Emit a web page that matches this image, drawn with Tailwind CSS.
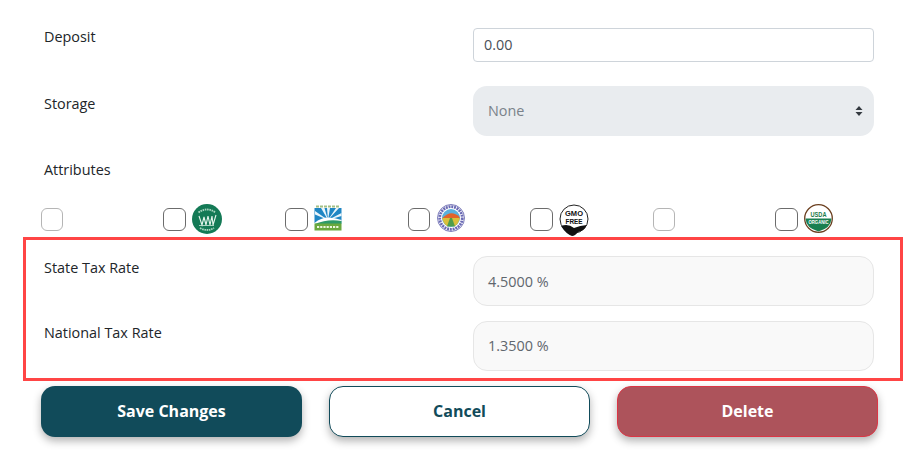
<!DOCTYPE html>
<html>
<head>
<meta charset="utf-8">
<script src="https://cdn.jsdelivr.net/npm/@tailwindcss/browser@4"></script>
</head>
<body class="bg-white font-['Open_Sans',sans-serif] text-[14.4px] text-[#212529]">
<div class="w-[920px] h-[476px] overflow-hidden">
  <!-- Deposit -->
  <div class="flex pl-[44px] pt-[28px] h-[86px]">
    <div class="w-[429px] leading-[17px]">Deposit</div>
    <div class="w-[401px] h-[34px] bg-white border border-[#ced4da] rounded-[4px] px-[10px] flex items-center text-[#495057] pb-[1px]">0.00</div>
  </div>
  <!-- Storage -->
  <div class="flex pl-[44px] h-[74px]">
    <div class="w-[429px] pt-[9px] leading-[17px]">Storage</div>
    <div class="w-[401px] h-[50px] bg-[#e9ecef] rounded-[14px] pl-[15px] pr-[11px] flex items-center justify-between text-[#7a828a] pb-[1px]">
      <span>None</span>
      <svg width="8" height="12" viewBox="0 0 8 12"><path d="M4 1 L7.5 5 L0.5 5 Z M4 11 L0.5 7 L7.5 7 Z" fill="#343a40"/></svg>
    </div>
  </div>
  <!-- Attributes -->
  <div class="pl-[44px] h-[44px] leading-[19px]">Attributes</div>
  <!-- Checkbox row -->
  <div class="h-[31px] pl-[41px] grid grid-rows-[31px] grid-cols-[122px_122px_123px_122px_123px_122px_100px] items-center">
    <div class="flex items-center"><span class="w-[22px] h-[23px] rounded-[6px] border border-[#b5b5b5] bg-white block"></span></div>
    <div class="flex items-center gap-[6px]">
      <span class="w-[23px] h-[23px] rounded-[6px] border border-[#6c6c6c] bg-white block"></span>
      <svg width="30" height="30" viewBox="0 0 30 30" class="mb-[1px]"><circle cx="15" cy="15" r="15" fill="#147a56"/><path d="M7 12 L10 21 L12 13 L14 21 L16 12 L18 21 L20 12 L21 21 L24 11" stroke="#e6f5ed" stroke-width="1.1" fill="none"/><path d="M7 21.5 H22" stroke="#cfe9dc" stroke-width="0.8"/><path d="M6.5 8.5 Q15 2.5 23.5 8.5" stroke="#a9d6c0" stroke-width="1.8" stroke-dasharray="1.6 0.7" fill="none"/><path d="M8 24 Q15 28 22 24" stroke="#a9d6c0" stroke-width="1.8" stroke-dasharray="1.6 0.7" fill="none"/></svg>
    </div>
    <div class="flex items-center gap-[6px]">
      <span class="w-[23px] h-[23px] rounded-[6px] border border-[#6c6c6c] bg-white block"></span>
      <svg width="28" height="26" viewBox="0 0 28 26" class="mb-[4px]"><path d="M2 1.5 H26" stroke="#a3bf85" stroke-width="2" stroke-dasharray="3 1"/><rect x="0.500" y="3" width="27" height="15" fill="#1f86c4"/><path d="M14 15 L1 6 V9.500 L14 15 L7 3 H10.500 L14 15 L13 3 H16 L14 15 L22 3 H25 L14 15 L27.500 8 V11 Z" fill="#e9f5fb"/><path d="M0.500 18 Q7 12.500 14 12.500 Q21 12.500 27.500 15 V18 Z" fill="#fff"/><path d="M0.500 19 Q14 13.500 27.500 16 V19 Z" fill="#2d9a6a"/><rect x="0.500" y="18.500" width="27" height="7" fill="#6aa83e"/><path d="M3 22 H25" stroke="#eef6e0" stroke-width="1.800" stroke-dasharray="2.200 1"/></svg>
    </div>
    <div class="flex items-center gap-[7px]">
      <span class="w-[22px] h-[23px] rounded-[6px] border border-[#6c6c6c] bg-white block"></span>
      <svg width="28" height="28" viewBox="0 0 28 28" class="mb-[3px]"><circle cx="14" cy="14" r="13.500" fill="#fff" stroke="#5a5aa8" stroke-width="0.800"/><circle cx="14" cy="14" r="11.300" fill="none" stroke="#6a6ab4" stroke-width="2.800" stroke-dasharray="2 0.800"/><circle cx="14" cy="14" r="9" fill="#5ab0dc"/><path d="M5.500 14 Q14 5 22.500 13 L22.500 15 H5.500 Z" fill="#e2632a"/><path d="M5.200 14 H22.800 Q22 19 18 22 H10 Q6 19 5.200 14 Z" fill="#d9bf3a"/><path d="M10 22.500 L13 14 H15 L18 22.500 Z" fill="#4f9d4a"/></svg>
    </div>
    <div class="flex items-center gap-[6px]">
      <span class="w-[23px] h-[23px] rounded-[6px] border border-[#6c6c6c] bg-white block"></span>
      <svg width="30" height="32" viewBox="0 0 30 32" class="mt-[1px]"><circle cx="15" cy="15" r="14" fill="#fff" stroke="#222" stroke-width="1"/><text x="15" y="12" text-anchor="middle" font-size="7" font-weight="700" font-family="Liberation Sans" fill="#111" textLength="18" lengthAdjust="spacingAndGlyphs">GMO</text><text x="15" y="20.100" text-anchor="middle" font-size="7" font-weight="700" font-family="Liberation Sans" fill="#111" textLength="17" lengthAdjust="spacingAndGlyphs">FREE</text><path d="M2 22 Q9 19 15 24 Q21 21.500 28 21 Q25 27 19 28 Q16 32 13 32 Q7 30 2 22 Z" fill="#111"/></svg>
    </div>
    <div class="flex items-center"><span class="w-[22px] h-[23px] rounded-[6px] border border-[#b5b5b5] bg-white block"></span></div>
    <div class="flex items-center gap-[6px]">
      <span class="w-[23px] h-[23px] rounded-[6px] border border-[#6c6c6c] bg-white block"></span>
      <svg width="29" height="29" viewBox="0 0 29 29" class="mb-[2px]"><circle cx="14.500" cy="14.500" r="13.800" fill="#fff" stroke="#6b3f1f" stroke-width="1.300"/><text x="14.500" y="12.500" text-anchor="middle" font-size="8" font-weight="700" font-family="Liberation Sans" fill="#1a7a4a" textLength="16" lengthAdjust="spacingAndGlyphs">USDA</text><path d="M1.500 14.500 H27.500 Q27 24 14.500 27.500 Q2 24 1.500 14.500 Z" fill="#1a7f50"/><text x="14.500" y="20" text-anchor="middle" font-size="5" font-weight="700" font-family="Liberation Sans" fill="#fff" textLength="20" lengthAdjust="spacingAndGlyphs">ORGANIC</text></svg>
    </div>
  </div>
  <!-- Highlighted tax box -->
  <div class="ml-[23px] w-[880px] h-[144px] border-[3px] border-[#ff4545] pl-[18px] pt-[16px] mt-[2px]">
    <div class="flex h-[65px]">
      <div class="w-[429px] leading-[19px] pt-[2px]">State Tax Rate</div>
      <div class="w-[401px] h-[50px] bg-[#f9f9f9] border border-[#e6e6e6] rounded-[14px] px-[14px] pt-[1px] flex items-center text-[#5f666d]">4.5000 %</div>
    </div>
    <div class="flex h-[50px]">
      <div class="w-[429px] leading-[19px] pt-[2px]">National Tax Rate</div>
      <div class="w-[401px] h-[50px] bg-[#f9f9f9] border border-[#e6e6e6] rounded-[14px] px-[14px] flex items-center text-[#5f666d]">1.3500 %</div>
    </div>
  </div>
  <!-- Buttons -->
  <div class="flex pl-[41px] gap-[27px] mt-[5px]">
    <button class="w-[261px] h-[51px] pb-[1px] bg-[#114b5a] rounded-[14px] text-white font-bold text-[16px] shadow-[0_4px_8px_rgba(0,0,0,0.3)]">Save Changes</button>
    <button class="w-[261px] h-[51px] pb-[2px] bg-white border border-[#114b5a] rounded-[14px] text-[#114b5a] font-bold text-[16px] shadow-[0_4px_8px_rgba(0,0,0,0.3)]">Cancel</button>
    <button class="w-[261px] h-[51px] pb-[2px] bg-[#ad535b] border border-[#dc3545] rounded-[14px] text-white font-bold text-[16px] shadow-[0_4px_8px_rgba(0,0,0,0.3)]">Delete</button>
  </div>
</div>
</body>
</html>
